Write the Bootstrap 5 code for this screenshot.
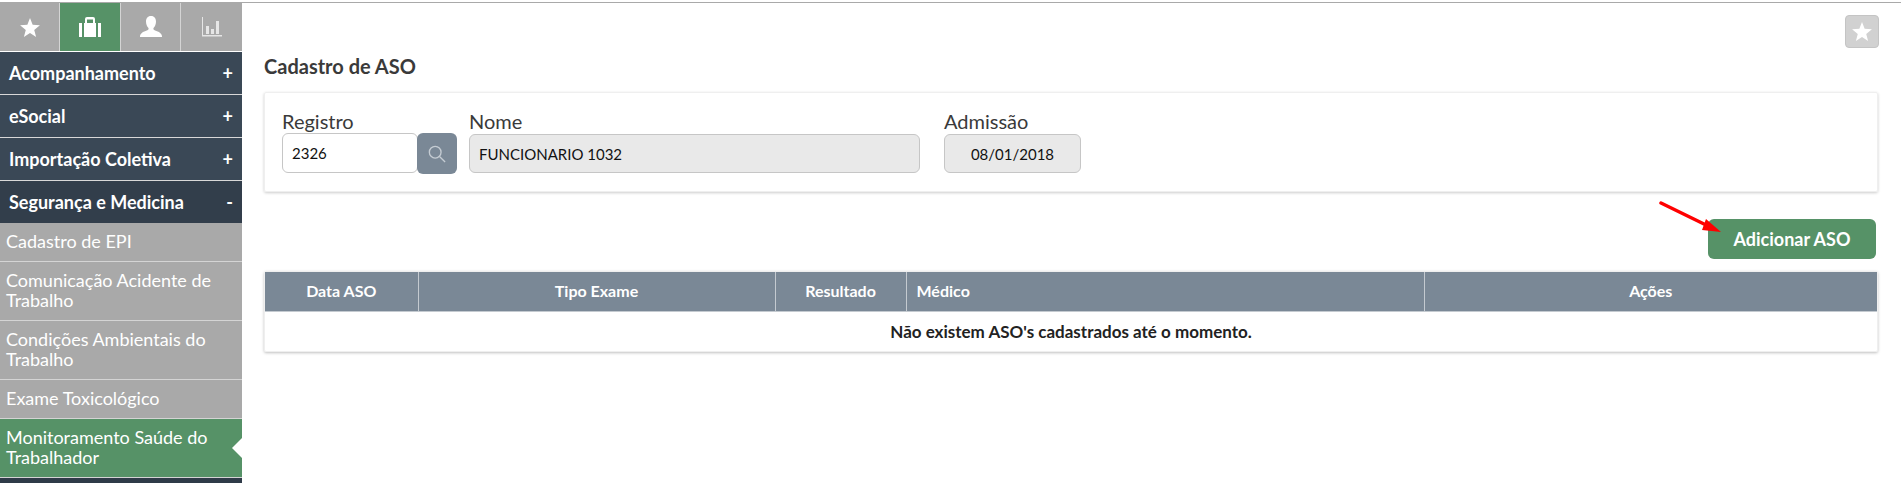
<!DOCTYPE html>
<html lang="pt-BR">
<head>
    <meta charset="UTF-8">
    <meta name="viewport" content="width=device-width, initial-scale=1.0">
    <title>Cadastro de ASO</title>
    <link href="https://cdn.jsdelivr.net/npm/bootstrap@5.3.0/dist/css/bootstrap.min.css" rel="stylesheet">
    <style>
    html, body { height: 483px; overflow: hidden; }
    body { font-family: "Lato", "Liberation Sans", sans-serif; color: #3a3a3a; background: #fff; }
    .page-wrap { margin-top: 2px; border-top: 1px solid #a9a9a9; height: 481px; position: relative; }
    .side { width: 242px; flex: none; background: #2f3b48; height: 480px; overflow: hidden; }
    .tabs { height: 49px; background: #a9a9a9; border-bottom: 1px solid #fff; }
    .tab-cell { flex: 0 0 60px; border-right: 1px solid #d4d4d4; }
    .tab-cell:last-child { flex: 1 1 0; border-right: 0; }
    .tab-on { flex-basis: 61px; background: #569267; }
    .menu-head { height: 43px; background: #3a4856; color: #fff; font-size: 18px; font-weight: 700; padding: 0 9px; border-bottom: 1px solid #d8d8d8; }
    .menu-open { background: #323e4b; border-bottom: 0; height: 42px; }
    .menu-sub { background: #a9a9a9; color: #fff; font-size: 18px; line-height: 20px; padding: 8px 6px 10px; border-bottom: 1px solid #d4d4d4; }
    .menu-on { background: #569267; position: relative; }
    .menu-on::after { content: ""; position: absolute; right: 0; top: 19px; border: 10px solid transparent; border-right-color: #fff; border-left: 0; }
    .main-area { padding: 0 24px 0 22px; }
    .star-btn { width: 34px; height: 33px; background: #d1d1d1; border: 1px solid #c4c4c4; border-radius: 4px; margin: 12px -2px 0 0; }
    .page-title { font-size: 20px; font-weight: 700; color: #3a3a3a; margin: 0; padding-top: 6px; height: 44px; }
    .form-box { height: 100px; border: 1px solid #efefef; border-radius: 2px; box-shadow: 0 1px 3px rgba(0,0,0,.2); padding: 17px 17px 0; margin-right: -1px; }
    .form-lbl { font-size: 20px; line-height: 23px; margin: 0; color: #3a3a3a; display: block; }
    .form-control.fld { height: 40px; border-radius: 6px; border-color: #c6c6c6; font-size: 15px; color: #111; padding: 0 9px; }
    .form-control.fld:disabled { background: #e9e9e9; opacity: 1; margin-top: 1px; height: 39px; }
    .fld-reg { width: 136px; }
    .fld-nome { width: 451px; }
    .fld-adm { width: 137px; text-align: center; }
    .search-btn { width: 40px; height: 41px; background: #7a8896; border-radius: 6px; border: 0; padding: 0; margin-left: -1px; }
    .add-btn { background: #569267; color: #fff; font-size: 18px; font-weight: 700; width: 168px; height: 40px; border-radius: 6px; border: 0; padding: 0; margin: 27px 1px 12px 0; }
    .add-btn:hover { background: #4b8159; color: #fff; }
    .grid-box { border: 1px solid #efefef; border-radius: 2px; box-shadow: 0 1px 3px rgba(0,0,0,.25); margin-right: -1px; }
    .aso-table { table-layout: fixed; margin: 0; }
    .aso-table th { background: #7a8896; color: #fff; font-size: 16px; font-weight: 700; height: 39px; padding: 0 10px; vertical-align: middle; border: 0; border-right: 1px solid #c4cad0; border-bottom: 1px solid #c4cad0; }
    .aso-table th:last-child { border-right: 0; }
    .aso-table td { font-size: 17px; font-weight: 700; color: #222; height: 40px; padding: 0; vertical-align: middle; border: 0; }
    .red-arrow { position: absolute; left: 1655px; top: 198px; }
    </style>
</head>
<body>
<div class="page-wrap d-flex">
    <div class="side">
        <div class="tabs d-flex">
            <div class="tab-cell d-flex align-items-center justify-content-center">
                <svg width="20" height="19" viewBox="0 0 24 23"><path fill="#fff" d="M12 0l3.200 8.300 8.800.5-6.900 5.600 2.300 8.600L12 18.200 4.600 23l2.300-8.600L0 8.800l8.800-.5z"/></svg>
            </div>
            <div class="tab-cell tab-on d-flex align-items-center justify-content-center">
                <svg width="22" height="22" viewBox="0 0 22 22"><path fill="#fff" d="M0 7h3v14H0zM19 7h3v14h-3zM5 7h1V3q0-2 2-2h6q2 0 2 2v4h1v14H5zM8 7h6V3.500H8z"/></svg>
            </div>
            <div class="tab-cell d-flex align-items-center justify-content-center">
                <svg width="22" height="22" viewBox="0 0 22 22"><path fill="#fff" d="M11 0c3.500 0 5 2.700 5 5.500 0 2.600-1.100 5-2.300 6.300-.5.600-.4 1.800.4 2.200 2.500 1.200 7.900 2.300 7.900 6.500V21H0v-.5C0 16.300 5.400 15.200 7.900 14c.8-.4.900-1.600.4-2.200C7.100 10.500 6 8.100 6 5.500 6 2.700 7.500 0 11 0z"/></svg>
            </div>
            <div class="tab-cell d-flex align-items-center justify-content-center">
                <svg width="20" height="20" viewBox="0 0 20 20"><path fill="#e6e6e6" d="M0 0h1v18h19v1.500H0zM4 9h3v8H4zM9 12h3v5H9zM14 4h3v13h-3z"/></svg>
            </div>
        </div>
        <div class="menu-head d-flex align-items-center justify-content-between"><span>Acompanhamento</span><span>+</span></div>
        <div class="menu-head d-flex align-items-center justify-content-between"><span>eSocial</span><span>+</span></div>
        <div class="menu-head d-flex align-items-center justify-content-between"><span>Importação Coletiva</span><span>+</span></div>
        <div class="menu-head menu-open d-flex align-items-center justify-content-between"><span>Segurança e Medicina</span><span>-</span></div>
        <div class="menu-sub">Cadastro de EPI</div>
        <div class="menu-sub">Comunicação Acidente de Trabalho</div>
        <div class="menu-sub">Condições Ambientais do Trabalho</div>
        <div class="menu-sub">Exame Toxicológico</div>
        <div class="menu-sub menu-on">Monitoramento Saúde do Trabalhador</div>
    </div>
    <div class="main-area flex-grow-1">
        <div class="d-flex justify-content-end">
            <div class="star-btn d-flex align-items-center justify-content-center">
                <svg width="20" height="19" viewBox="0 0 24 23"><path fill="#fff" d="M12 0l3.200 8.300 8.800.5-6.900 5.600 2.300 8.600L12 18.200 4.600 23l2.300-8.600L0 8.800l8.800-.5z"/></svg>
            </div>
        </div>
        <h5 class="page-title">Cadastro de ASO</h5>
        <div class="form-box d-flex">
            <div class="me-2">
                <label class="form-lbl">Registro</label>
                <div class="d-flex align-items-start">
                    <input class="form-control fld fld-reg" value="2326">
                    <button class="search-btn d-flex align-items-center justify-content-center" type="button">
                        <svg width="18" height="18" viewBox="0 0 20 20" fill="none" stroke="#c5ccd3" stroke-width="1.500"><circle cx="8" cy="8" r="6.500"/><path d="M12.800 12.800L19 19"/></svg>
                    </button>
                </div>
            </div>
            <div class="ms-1 me-4">
                <label class="form-lbl">Nome</label>
                <input class="form-control fld fld-nome" value="FUNCIONARIO 1032" disabled>
            </div>
            <div>
                <label class="form-lbl">Admissão</label>
                <input class="form-control fld fld-adm" value="08/01/2018" disabled>
            </div>
        </div>
        <div class="d-flex justify-content-end">
            <button class="btn add-btn" type="button">Adicionar ASO</button>
        </div>
        <div class="grid-box">
            <table class="table aso-table">
                <colgroup>
                    <col style="width:153px"><col style="width:357px"><col style="width:131px"><col style="width:518px"><col>
                </colgroup>
                <thead>
                    <tr>
                        <th class="text-center">Data ASO</th>
                        <th class="text-center">Tipo Exame</th>
                        <th class="text-center">Resultado</th>
                        <th>Médico</th>
                        <th class="text-center">Ações</th>
                    </tr>
                </thead>
                <tbody>
                    <tr><td colspan="5" class="text-center">Não existem ASO's cadastrados até o momento.</td></tr>
                </tbody>
            </table>
        </div>
    </div>
    <svg class="red-arrow" width="75" height="45" viewBox="0 0 75 45">
        <path d="M6 2L49 23" stroke="#f00" stroke-width="3.500" stroke-linecap="round"/>
        <path fill="#f00" d="M66 31L47 29 51 18z"/>
    </svg>
</div>
</body>
</html>
